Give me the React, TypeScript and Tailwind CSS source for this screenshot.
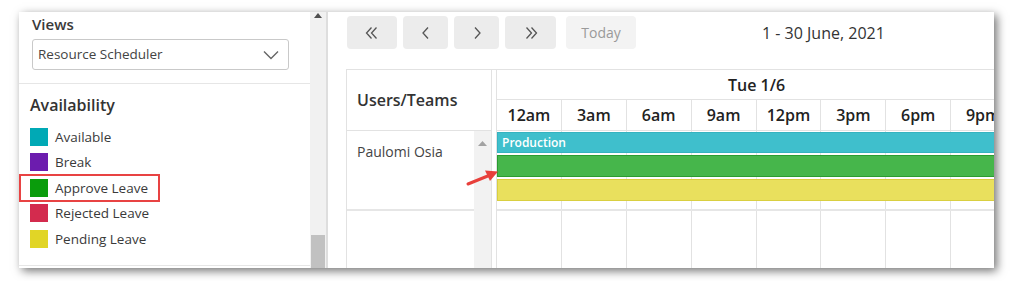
import React from "react";

const legend = [
  { label: "Available", color: "bg-[#00a9b5]" },
  { label: "Break", color: "bg-[#6c1cae]" },
  { label: "Approve Leave", color: "bg-[#0a9c0c]", marked: true },
  { label: "Rejected Leave", color: "bg-[#d32b4e]" },
  { label: "Pending Leave", color: "bg-[#e1d526]" },
];

const hours = ["12am", "3am", "6am", "9am", "12pm", "3pm", "6pm", "9pm"];

const navButtons = [
  { key: "first", w: "w-[50px]", icon: "M9.5 4.5l-5 5.5 5 5.5M14.5 4.5l-5 5.5 5 5.5" },
  { key: "prev", w: "w-[45px]", icon: "M12 4.5l-5 5.5 5 5.5" },
  { key: "next", w: "w-[45px]", icon: "M8 4.5l5 5.5-5 5.5" },
  { key: "last", w: "w-[51px]", icon: "M5.5 4.5l5 5.5-5 5.5M10.5 4.5l5 5.5-5 5.5" },
];

const App: React.FC = () => {
  return (
    <div className="w-[1014px] h-[281px] bg-white pt-[12px] pl-[19px] font-['Open_Sans',sans-serif] text-[#333]">
      <div className="relative w-[975px] h-[256px] bg-white overflow-hidden flex shadow-[3px_3px_9px_rgba(0,0,0,0.55)]">
        {/* sidebar */}
        <div className="w-[291px] flex flex-col">
          <div className="h-[72px] pl-[13px] pr-[21px] border-b border-[#e6e6e6]">
            <div className="pt-[2px] text-[15px] leading-[20px] font-semibold text-[#3a3a3a]">Views</div>
            <div className="mt-[5px] h-[31px] w-[257px] border border-[#c9c9c9] rounded-[3px] flex items-center justify-between pl-[5px] pr-[9px]">
              <span className="text-[13.5px] text-[#444]">Resource Scheduler</span>
              <svg width="16" height="10" viewBox="0 0 16 10">
                <path d="M1 1.5l7 7 7-7" fill="none" stroke="#666" strokeWidth="1.4" />
              </svg>
            </div>
          </div>
          <div className="flex-1 pl-[11px] border-b border-[#e6e6e6] mb-[2px]">
            <div className="pt-[10px] h-[40px] text-[16px] leading-[22px] font-semibold text-[#333]">Availability</div>
            <div>
              {legend.map((item) => (
                <div key={item.label} className="relative h-[25.5px] flex items-center gap-[7px]">
                  <span className={`w-[18px] h-[18px] ${item.color}`} />
                  <span className="text-[13.5px] text-[#3a3a3a]">{item.label}</span>
                  {item.marked && (
                    <span className="absolute left-[-11px] top-[-1px] w-[141px] h-[28px] border-2 border-[#e84343]" />
                  )}
                </div>
              ))}
            </div>
          </div>
        </div>

        {/* sidebar scrollbar */}
        <div className="w-[16px] bg-[#f1f1f1] flex flex-col justify-between items-center">
          <svg width="8" height="5" viewBox="0 0 8 5" className="mt-[1px]">
            <path d="M0 5L4 0l4 5z" fill="#505050" />
          </svg>
          <div className="w-[14px] h-[33px] bg-[#c1c1c1]" />
        </div>
        <div className="w-[2px] bg-[#dedede]" />

        {/* main */}
        <div className="flex-1 pl-[19px] pt-[4px] min-w-0">
          <div className="flex items-center h-[33px]">
            <div className="flex gap-[6px]">
              {navButtons.map((b) => (
                <div key={b.key} className={`${b.w} h-[33px] rounded-[4px] bg-[#ececec] flex items-center justify-center`}>
                  <svg width="20" height="20" viewBox="0 0 20 20">
                    <path d={b.icon} fill="none" stroke="#555" strokeWidth="1.3" />
                  </svg>
                </div>
              ))}
            </div>
            <div className="ml-[10px] w-[70px] h-[33px] rounded-[4px] bg-[#f3f3f3] flex items-center justify-center text-[14px] text-[#9a9a9a]">
              Today
            </div>
            <div className="ml-[126px] text-[16px] text-[#333]">1 - 30 June, 2021</div>
          </div>

          <div className="mt-[20px] -ml-[1px] flex border-t border-[#e2e2e2]">
            {/* users column */}
            <div className="w-[146px] shrink-0 border-l border-r border-[#e2e2e2]">
              <div className="h-[61px] border-b border-[#e2e2e2] flex items-center pl-[10px] text-[16px] font-semibold text-[#333]">
                Users/Teams
              </div>
              <div className="flex">
                <div className="flex-1">
                  <div className="h-[80px] border-b-2 border-[#e6e6e6] pl-[10px] pt-[10px] text-[14px] text-[#444]">
                    Paulomi Osia
                  </div>
                </div>
                <div className="w-[17px] h-[140px] bg-[#f2f2f2] flex justify-center">
                  <svg width="9" height="5" viewBox="0 0 9 5" className="mt-[10px]">
                    <path d="M0 5L4.5 0 9 5z" fill="#a3a3a3" />
                  </svg>
                </div>
              </div>
            </div>
            <div className="w-[4px] shrink-0" />

            {/* timeline */}
            <div className="w-[520px] shrink-0 border-l border-[#e2e2e2]">
              <div className="h-[30px] border-b border-[#e2e2e2] flex items-center justify-center text-[16px] font-semibold text-[#222]">
                Tue 1/6
              </div>
              <div className="h-[31px] flex border-b border-[#e2e2e2]">
                {hours.map((h) => (
                  <div key={h} className="w-[65px] border-r border-[#e2e2e2] flex items-center justify-center text-[16px] font-semibold text-[#222]">
                    {h}
                  </div>
                ))}
              </div>
              <div className="relative h-[80px] flex border-b-2 border-[#e6e6e6]">
                {hours.map((h) => (
                  <div key={h} className="w-[65px] border-r border-[#e2e2e2]" />
                ))}
                <div className="absolute left-0 top-[1px] w-[519px] flex flex-col gap-[2px]">
                  <div className="h-[21px] bg-[#3fbfcc] border border-[#35b3c0] flex items-center pl-[4px] text-[12px] font-semibold text-white">
                    Production
                  </div>
                  <div className="h-[22px] bg-[#46b64b] border border-[#2b9c31]" />
                  <div className="h-[22px] bg-[#e9e05d] border border-[#d9cf40]" />
                </div>
              </div>
              <div className="h-[60px] flex">
                {hours.map((h) => (
                  <div key={h} className="w-[65px] border-r border-[#e2e2e2]" />
                ))}
              </div>
            </div>
          </div>
        </div>

        {/* annotation arrow */}
        <svg className="absolute left-[444px] top-[150px]" width="40" height="30" viewBox="0 0 40 30">
          <path d="M5 22L26 13.5" stroke="#e8403b" strokeWidth="3" strokeLinecap="round" />
          <path d="M35 9.5L22 8.5L27 19z" fill="#e8403b" />
        </svg>
      </div>
    </div>
  );
};

export default App;
